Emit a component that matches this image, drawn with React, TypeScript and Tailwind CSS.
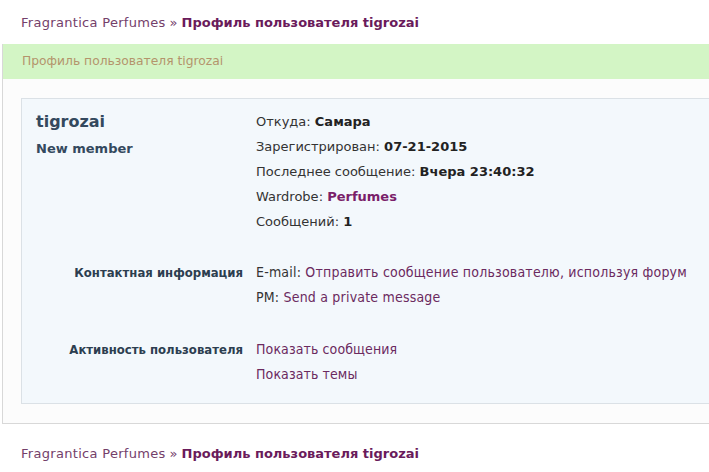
import React from "react";

const base = { fontFamily: '"DejaVu Sans", Verdana, sans-serif' };
const cond = { fontFamily: '"DejaVu Sans Condensed", "DejaVu Sans", sans-serif' };

function Crumb() {
  return (
    <div className="h-[44px] pl-[21px] flex items-center text-[13px]" style={base}>
      <span className="text-[#74406a] tracking-[0.3px]">Fragrantica Perfumes</span>
      <span className="text-[#74406a] ml-[4px] mr-[4px]">»</span>
      <span className="font-bold text-[#6a1b5b]">Профиль пользователя tigrozai</span>
    </div>
  );
}

function Info({ label, value, purple }: { label: string; value: string; purple?: boolean }) {
  return (
    <div className="h-[25px] flex items-center text-[13px] text-[#333]">
      <span>{label}:&nbsp;</span>
      <span className={purple ? "font-bold text-[#7a1f6a]" : "font-bold text-[#222]"}>{value}</span>
    </div>
  );
}

export default function App() {
  return (
    <div className="w-[709px] h-[472px] overflow-hidden bg-white" style={base}>
      <div className="w-[780px]">
        <div className="pt-[1px] h-[44px]">
          <Crumb />
        </div>
        <div className="ml-[2px] border-l border-b border-[#d8d8d8] bg-[#fcfcfc]">
          <div className="h-[35px] bg-[#d3f5c5] pl-[19px] flex items-center text-[12.3px] text-[#b4946c]">
            Профиль пользователя tigrozai
          </div>
          <div className="pt-[19px] pb-[19px] pl-[18px]">
            <div className="border border-[#dbe1e6] bg-[#f3f8fc] pt-[10px] pb-[16px]">
              <div className="flex">
                <div className="w-[234px] pl-[14px] flex flex-col">
                  <div className="h-[26px] flex items-center text-[16px] font-bold text-[#34495e]">tigrozai</div>
                  <div className="h-[27px] pt-[1px] flex items-center text-[13px] font-bold text-[#34495e]">New member</div>
                </div>
                <div className="flex flex-col">
                  <Info label="Откуда" value="Самара" />
                  <Info label="Зарегистрирован" value="07-21-2015" />
                  <Info label="Последнее сообщение" value="Вчера 23:40:32" />
                  <Info label="Wardrobe" value="Perfumes" purple />
                  <Info label="Сообщений" value="1" />
                </div>
              </div>
              <div className="flex mt-[26px]" style={cond}>
                <div className="w-[221px] h-[25px] flex items-center justify-end text-[13px] font-bold text-[#2c3e50]">
                  Контактная информация
                </div>
                <div className="ml-[13px] flex flex-col text-[14px] tracking-[0.2px]">
                  <div className="h-[25px] flex items-center">
                    <span className="text-[#333]">E-mail:&nbsp;</span>
                    <span className="text-[#6b2a5f]">Отправить сообщение пользователю, используя форум</span>
                  </div>
                  <div className="h-[25px] flex items-center">
                    <span className="text-[#333]">PM:&nbsp;</span>
                    <span className="text-[#6b2a5f]">Send a private message</span>
                  </div>
                </div>
              </div>
              <div className="flex mt-[27px]" style={cond}>
                <div className="w-[221px] h-[25px] flex items-center justify-end text-[13px] font-bold text-[#2c3e50]">
                  Активность пользователя
                </div>
                <div className="ml-[13px] flex flex-col text-[14px] tracking-[0.1px] text-[#6b2a5f]">
                  <div className="h-[25px] flex items-center">Показать сообщения</div>
                  <div className="h-[25px] flex items-center">Показать темы</div>
                </div>
              </div>
            </div>
          </div>
        </div>
        <div className="h-[8px]" />
        <Crumb />
      </div>
    </div>
  );
}
